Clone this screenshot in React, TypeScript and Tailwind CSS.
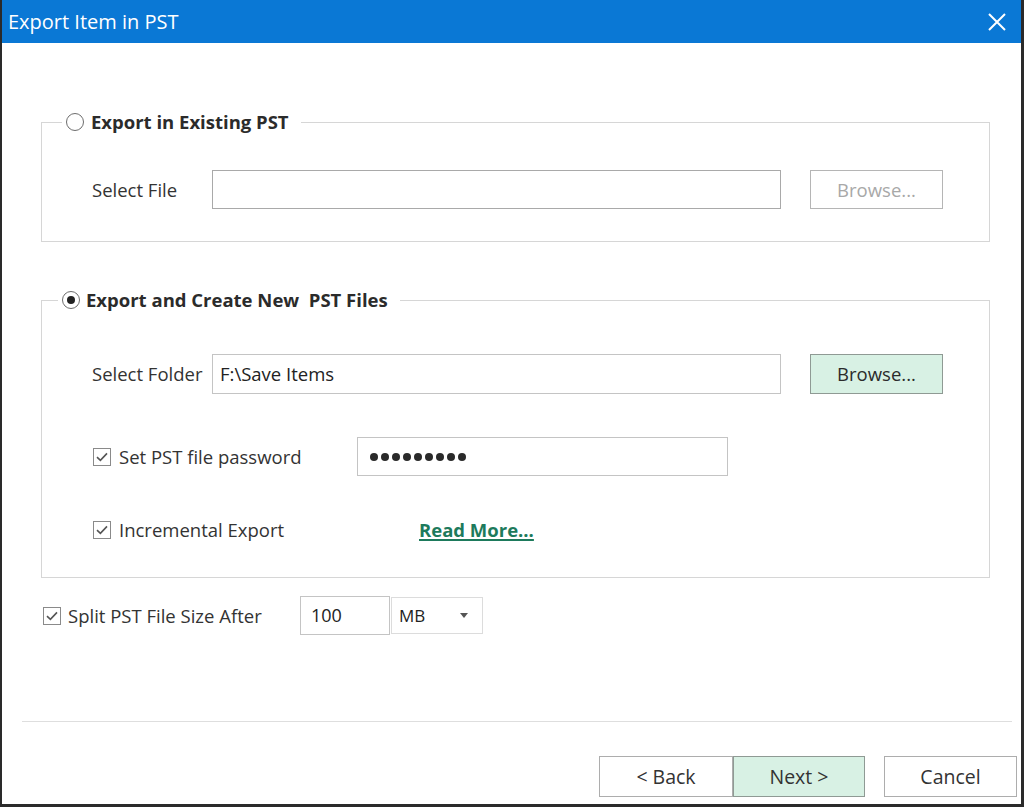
import React from 'react';

const font = { fontFamily: '"Open Sans", "Noto Sans", Arial, sans-serif' };

const Radio: React.FC<{ checked?: boolean }> = ({ checked }) => (
    <span className="flex h-[18px] w-[18px] items-center justify-center rounded-full border border-[#6d6d6d] bg-white">
        {checked && <span className="h-[8px] w-[8px] rounded-full bg-[#222]" />}
    </span>
);

const Check: React.FC = () => (
    <span className="flex h-[18px] w-[18px] shrink-0 items-center justify-center border border-[#8a8a8a] bg-white">
        <svg width="12" height="10" viewBox="0 0 12 10" fill="none">
            <path d="M1 5.2 L4.4 8.4 L11 1.4" stroke="#555" strokeWidth="1.6" />
        </svg>
    </span>
);

const App: React.FC = () => {
    return (
        <div
            className="flex h-[807px] w-[1024px] flex-col overflow-hidden border-l-2 border-r-[3px] border-b-[3px] border-[#2a2a2a] bg-white text-[#333]"
            style={font}
        >
            {/* Title bar */}
            <div className="flex h-[43px] shrink-0 items-center justify-between bg-[#0a78d5] pl-[6px] pr-[14px] text-white">
                <span className="text-[20px] leading-none">Export Item in PST</span>
                <svg width="20" height="20" viewBox="0 0 20 20">
                    <path d="M2 2 L18 18 M18 2 L2 18" stroke="white" strokeWidth="2" />
                </svg>
            </div>

            {/* Existing PST group */}
            <fieldset className="ml-[39px] mt-[67px] w-[949px] border border-[#d6d6d6] pb-[32px]">
                <legend className="ml-[20px] flex items-center gap-[7px] pl-[4px] pr-[12px] text-[18.5px] font-bold leading-[24px] text-[#2b2b2b]">
                    <Radio />
                    Export in Existing PST
                </legend>
                <div className="mt-[36px] flex items-center pl-[50px]">
                    <span className="w-[120px] text-[18.5px]">Select File</span>
                    <div className="h-[39px] w-[569px] border border-[#a9a9a9] bg-white" />
                    <button className="ml-[29px] h-[39px] w-[133px] border border-[#b5b5b5] bg-white text-[18.5px] text-[#a8a8a8]">
                        Browse...
                    </button>
                </div>
            </fieldset>

            {/* New PST group */}
            <fieldset className="ml-[39px] mt-[46px] w-[949px] border border-[#d6d6d6] pb-[33px]">
                <legend className="ml-[16px] flex items-center gap-[6px] pl-[4px] pr-[12px] text-[18.5px] font-bold leading-[24px] text-[#2b2b2b]">
                    <Radio checked />
                    Export and Create New&nbsp; PST Files
                </legend>
                <div className="mt-[42px] flex items-center pl-[50px]">
                    <span className="w-[120px] text-[18.5px]">Select Folder</span>
                    <div className="flex h-[40px] w-[569px] items-center border border-[#c4c4c4] bg-white pl-[7px] text-[18.5px] text-[#222]">
                        F:\Save Items
                    </div>
                    <button className="ml-[29px] h-[40px] w-[133px] border border-[#8f9a94] bg-[#d8f1e4] text-[18.5px] text-[#2b2b2b]">
                        Browse...
                    </button>
                </div>
                <div className="mt-[43px] flex items-center pl-[51px]">
                    <div className="flex w-[264px] items-center gap-[8px] text-[18.5px]">
                        <Check />
                        Set PST file password
                    </div>
                    <div className="flex h-[39px] w-[371px] items-center gap-[3px] border border-[#c4c4c4] bg-white pl-[12px]">
                        {[0, 1, 2, 3, 4, 5, 6, 7, 8].map((i) => (
                            <span key={i} className="h-[8px] w-[8px] rounded-full bg-[#2a2a2a]" />
                        ))}
                    </div>
                </div>
                <div className="mt-[40px] flex h-[28px] items-center pl-[51px]">
                    <div className="flex w-[326px] items-center gap-[8px] text-[18.5px]">
                        <Check />
                        Incremental Export
                    </div>
                    <a className="text-[18.5px] font-bold text-[#1d7a5c] underline decoration-2 underline-offset-2">
                        Read More...
                    </a>
                </div>
            </fieldset>

            {/* Split size */}
            <div className="ml-[41px] mt-[18px] flex items-center">
                <div className="flex w-[257px] items-center gap-[7px] text-[18.5px]">
                    <Check />
                    Split PST File Size After
                </div>
                <div className="flex h-[39px] w-[90px] items-center border border-[#c4c4c4] bg-white pl-[10px] text-[18px] text-[#222]">
                    100
                </div>
                <div className="ml-[1px] flex h-[37px] w-[92px] items-center justify-between border border-[#dcdcdc] bg-white pl-[7px] pr-[14px] text-[17px] text-[#222]">
                    MB
                    <svg width="8" height="5" viewBox="0 0 8 5">
                        <path d="M0 0 L8 0 L4 5 Z" fill="#555" />
                    </svg>
                </div>
            </div>

            {/* Separator */}
            <div className="ml-[20px] mt-[86px] h-px w-[990px] bg-[#dedede]" />

            {/* Footer buttons */}
            <div className="mt-[34px] flex items-center pl-[597px]">
                <button className="h-[41px] w-[134px] border border-[#adadad] bg-white text-[19.5px] text-[#333]">
                    &lt; Back
                </button>
                <button className="h-[41px] w-[132px] border border-[#8f9a94] bg-[#d8f1e4] text-[19.5px] text-[#333]">
                    Next &gt;
                </button>
                <button className="ml-[19px] h-[41px] w-[133px] border border-[#adadad] bg-white text-[19.5px] text-[#333]">
                    Cancel
                </button>
            </div>
        </div>
    );
};

export default App;
